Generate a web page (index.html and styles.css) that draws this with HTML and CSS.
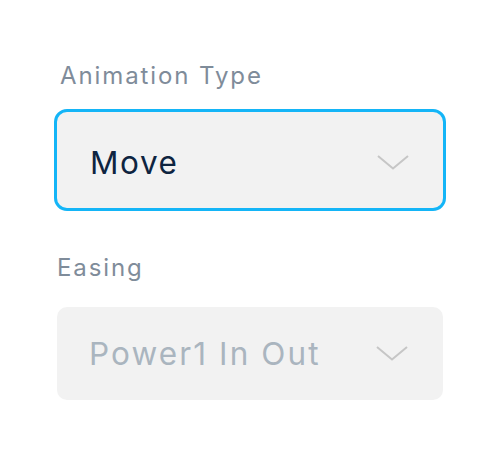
FILE: index.html
```html
<!DOCTYPE html>
<html>
<head>
<meta charset="utf-8">
<link rel="stylesheet" href="styles.css">
</head>
<body>
<div class="panel">
  <div class="field field-first">
    <div class="label label-active">Animation Type</div>
    <div class="select select-focused">
      <span class="value">Move</span>
      <svg class="chev" width="32" height="15" viewBox="0 0 32 15"><path d="M1 1 L16 13.5 L31 1" fill="none" stroke="#c6c6c6" stroke-width="2"/></svg>
    </div>
  </div>
  <div class="field field-second">
    <div class="label">Easing</div>
    <div class="select select-disabled">
      <span class="value">Power1 In Out</span>
      <svg class="chev" width="32" height="15" viewBox="0 0 32 15"><path d="M1 1 L16 13.5 L31 1" fill="none" stroke="#c6c6c6" stroke-width="2"/></svg>
    </div>
  </div>
</div>
</body>
</html>
```
FILE: styles.css
```css
html, body {
  margin: 0;
  background: #ffffff;
}
body {
  width: 500px;
  height: 458px;
  font-family: Inter, "Noto Sans", sans-serif;
}
.panel {
  display: flex;
  flex-direction: column;
  gap: 44px;
  padding: 60px 57px 0 57px;
}
.field {
  display: flex;
  flex-direction: column;
}
.field-first {
  gap: 20px;
}
.field-second {
  gap: 23px;
}
.label {
  font-size: 24px;
  line-height: 32px;
  letter-spacing: 1.9px;
  color: #7f8c9a;
}
.label-active {
  padding-left: 3px;
}
.select {
  display: flex;
  align-items: center;
  justify-content: space-between;
  height: 93px;
  box-sizing: border-box;
  padding: 0 35px 0 32px;
  background: #f2f2f2;
  border-radius: 10px;
}
.select-focused {
  height: 96px;
  padding: 0 34px 0 33px;
  outline: 3px solid #14b5f7;
  border-radius: 10px;
}
.value {
  font-size: 31.5px;
  letter-spacing: 1.6px;
  color: #0e2440;
}
.select-focused .value {
  margin-top: 4px;
}
.select-focused .chev {
  margin-top: 4px;
}
.select-disabled .value {
  letter-spacing: 2.1px;
  color: #aab5bf;
}
.chev {
  display: block;
}
```
